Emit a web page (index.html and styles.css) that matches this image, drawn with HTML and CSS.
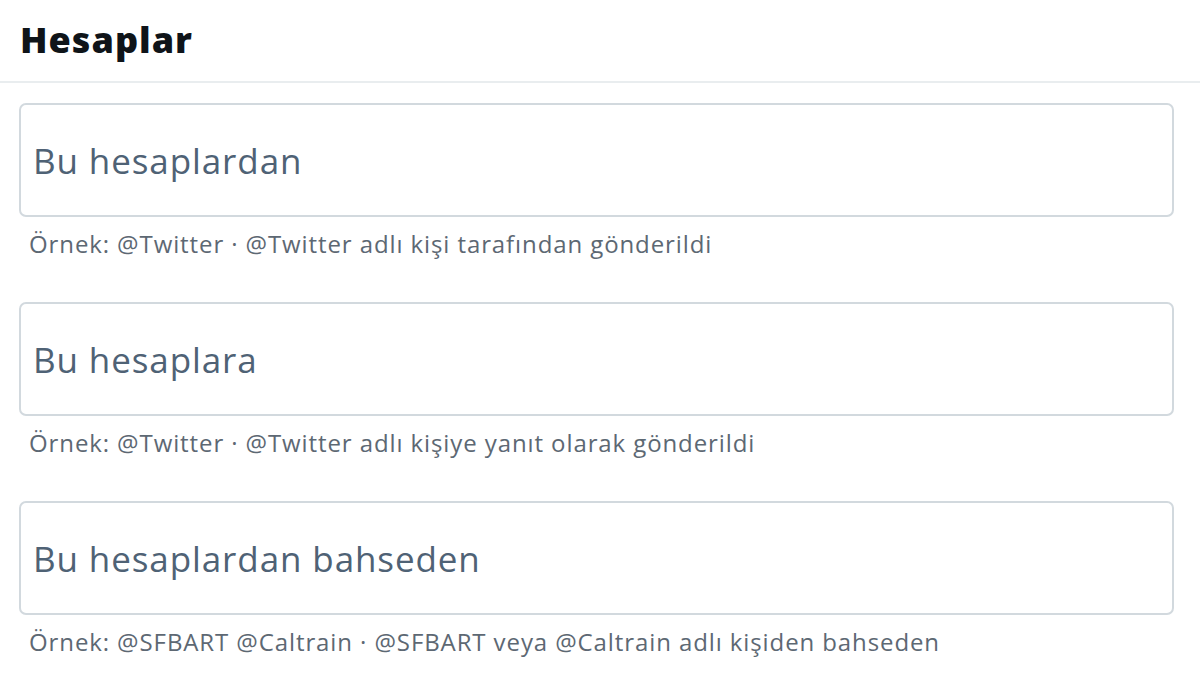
FILE: index.html
```html
<!DOCTYPE html>
<html lang="tr">
<head>
    <meta charset="UTF-8">
    <meta name="viewport" content="width=device-width, initial-scale=1.0">
    <title>Gelişmiş arama - Hesaplar</title>
    <link rel="stylesheet" href="styles.css">
</head>
<body>
    <!-- Başlık -->
    <div class="section-header">
        <h2>Hesaplar</h2>
    </div>

    <!-- Hesap alanları -->
    <div class="fields">
        <div class="field">
            <label class="input-box">
                <input type="text" placeholder="Bu hesaplardan">
            </label>
            <p class="hint">Örnek: @Twitter · @Twitter adlı kişi tarafından gönderildi</p>
        </div>

        <div class="field">
            <label class="input-box">
                <input type="text" placeholder="Bu hesaplara">
            </label>
            <p class="hint">Örnek: @Twitter · @Twitter adlı kişiye yanıt olarak gönderildi</p>
        </div>

        <div class="field">
            <label class="input-box">
                <input type="text" placeholder="Bu hesaplardan bahseden">
            </label>
            <p class="hint">Örnek: @SFBART @Caltrain · @SFBART veya @Caltrain adlı kişiden bahseden</p>
        </div>
    </div>
</body>
</html>
```

FILE: styles.css
```css
/* Genel */
body {
    margin: 0;
    background: #fff;
    font-family: 'Open Sans', 'Noto Sans', sans-serif;
    color: #14171a;
}

/* Başlık */
.section-header {
    padding: 17px 20px 18px;
    border-bottom: 2px solid #e9edef;
}

.section-header h2 {
    margin: 0;
    font-size: 36px;
    font-weight: 800;
    letter-spacing: 1px;
    line-height: 46px;
    color: #0f1419;
}

/* Alanlar */
.fields {
    padding: 20px 26px 0 19px;
}

.field {
    margin-bottom: 41px;
}

.input-box {
    display: flex;
    align-items: center;
    height: 114px;
    box-sizing: border-box;
    border: 2px solid #d2d9de;
    border-radius: 7px;
    padding: 0 12px;
}

.input-box input {
    flex: 1;
    border: none;
    outline: none;
    background: transparent;
    font-family: inherit;
    font-size: 35px;
    letter-spacing: 0.9px;
    color: #0f1419;
    padding: 0;
}

.input-box input::placeholder {
    color: #4f6275;
    opacity: 1;
}

.hint {
    margin: 0;
    padding: 10px 0 0 10px;
    font-size: 24px;
    letter-spacing: 0.9px;
    line-height: 34px;
    color: #5d6873;
}
```
